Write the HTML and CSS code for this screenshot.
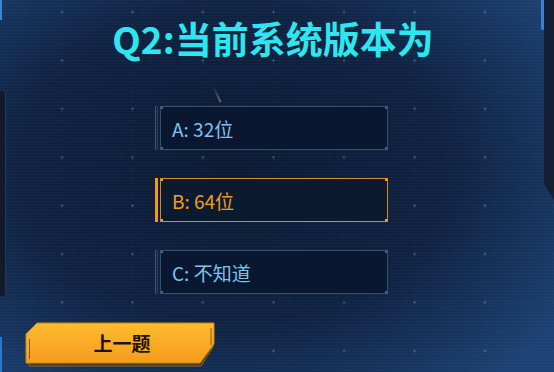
FILE: index.html
```html
<!DOCTYPE html>
<html lang="zh-CN">
<head>
<meta charset="utf-8">
<title>Q2</title>
<link rel="stylesheet" href="styles.css">
</head>
<body>
<div class="screen">
  <div class="edge-left-bar-top"></div>
  <div class="edge-left-panel"></div>
  <div class="edge-left-bar-bottom"></div>
  <div class="edge-right-panel"></div>
  <div class="edge-right-bar"></div>
  <div class="streak"></div>

  <h1 class="title">Q2:当前系统版本为</h1>

  <div class="options">
    <div class="option">
      <span class="option-mark"></span>
      <div class="option-box">A: 32位</div>
    </div>
    <div class="option option-active">
      <span class="option-mark"></span>
      <div class="option-box">B: 64位</div>
    </div>
    <div class="option">
      <span class="option-mark"></span>
      <div class="option-box">C: 不知道</div>
    </div>
  </div>

  <button class="prev-btn" type="button">
    <svg class="prev-shape" viewBox="0 0 194 48" width="194" height="48" aria-hidden="true">
      <defs>
        <linearGradient id="btnGrad" x1="0" y1="0" x2="0" y2="1">
          <stop offset="0" stop-color="#ffbb2e"/>
          <stop offset="1" stop-color="#f59c1e"/>
        </linearGradient>
      </defs>
      <polygon points="5,16 15,5 189,5 189,26 177,45 5,45" fill="#4a3818" stroke="#8a6420" stroke-width="1"/>
      <polygon points="2,13 13,2 190,2 190,23 176,42 2,42" fill="url(#btnGrad)" stroke="#c98814" stroke-width="1"/>
      <line x1="5.5" y1="18" x2="5.5" y2="38" stroke="#8a5a10" stroke-width="1"/>
      <line x1="187" y1="7" x2="187" y2="24" stroke="#8a5a10" stroke-width="1"/>
    </svg>
    <span class="prev-label">上一题</span>
  </button>
</div>
</body>
</html>
```

FILE: styles.css
```css
html, body {
  margin: 0;
  padding: 0;
  background: #0e1f3a;
}

.screen {
  position: relative;
  width: 554px;
  height: 372px;
  overflow: hidden;
  display: flex;
  flex-direction: column;
  font-family: "Noto Sans CJK SC", "Noto Sans", sans-serif;
  background:
    repeating-linear-gradient(to bottom, rgba(120, 160, 210, 0.045) 0 1px, transparent 1px 3px),
    radial-gradient(circle, rgba(140, 170, 210, 0.4) 0.8px, transparent 1.5px) 26.75px -12.2px / 70.5px 48.4px,
    radial-gradient(circle, rgba(110, 140, 185, 0.13) 0.6px, transparent 1.1px) 0 -12.2px / 9.8px 48.4px,
    radial-gradient(circle, rgba(110, 140, 185, 0.13) 0.6px, transparent 1.1px) 26.75px 0 / 70.5px 9.7px,
    radial-gradient(ellipse 70% 75% at 42% 45%, #0c1b33 0%, #0f2241 55%, #183661 85%, #1d4172 100%);
}

/* frame decorations */
.edge-left-bar-top {
  position: absolute;
  left: 0;
  top: 0;
  width: 2px;
  height: 20px;
  background: #3b86d6;
}
.edge-left-panel {
  position: absolute;
  left: 0;
  top: 91px;
  width: 5px;
  height: 205px;
  background: #0f1a2d;
  border-right: 1px solid #22385a;
  border-radius: 0 3px 3px 0;
}
.edge-left-bar-bottom {
  position: absolute;
  left: 0;
  top: 337px;
  width: 2px;
  height: 35px;
  background: #2f78c8;
}
.edge-right-panel {
  position: absolute;
  right: 0;
  top: 0;
  width: 10px;
  height: 200px;
  background: #141f33;
  clip-path: polygon(0 0, 100% 0, 100% 100%, 0 92%);
}
.edge-right-bar {
  position: absolute;
  left: 541px;
  top: 0;
  width: 3px;
  height: 30px;
  background: #3f7fd0;
  border-radius: 0 0 2px 2px;
}
.streak {
  position: absolute;
  left: 216px;
  top: 86px;
  width: 1.5px;
  height: 17px;
  background: linear-gradient(to bottom, rgba(200, 170, 150, 0), rgba(200, 160, 140, 0.55));
  transform: rotate(-25deg);
}

/* title */
.title {
  margin: 20px 0 0;
  padding-right: 8px;
  text-align: center;
  font-size: 37px;
  line-height: 37px;
  font-weight: 700;
  color: #2de6f0;
  letter-spacing: 0;
}

/* options */
.options {
  margin: 49px 0 0 155px;
  display: flex;
  flex-direction: column;
  gap: 28px;
}
.option {
  display: flex;
  width: 233px;
  height: 44px;
}
.option-mark {
  width: 3px;
  margin-right: 2px;
  border-left: 1px solid #3b5676;
  border-right: 1px solid #2b4362;
  box-sizing: border-box;
}
.option-box {
  flex: 1;
  display: flex;
  align-items: center;
  padding-left: 11px;
  box-sizing: border-box;
  border: 1px solid #34506f;
  color: #7ec4ef;
  font-size: 19px;
  background:
    linear-gradient(#4a6688, #4a6688) left top / 3px 3px no-repeat border-box,
    linear-gradient(#4a6688, #4a6688) right top / 3px 3px no-repeat border-box,
    linear-gradient(#4a6688, #4a6688) left bottom / 3px 3px no-repeat border-box,
    linear-gradient(#4a6688, #4a6688) right bottom / 3px 3px no-repeat border-box,
    #0a1730;
}
.option-active .option-mark {
  border: none;
  background: #f29a1e;
}
.option-active .option-box {
  border-color: #d68a1f;
  color: #f29c22;
  background:
    linear-gradient(#f5a22a, #f5a22a) left top / 3px 3px no-repeat border-box,
    linear-gradient(#f5a22a, #f5a22a) right top / 3px 3px no-repeat border-box,
    linear-gradient(#f5a22a, #f5a22a) left bottom / 3px 3px no-repeat border-box,
    linear-gradient(#f5a22a, #f5a22a) right bottom / 3px 3px no-repeat border-box,
    #0c1a30;
}

/* previous button */
.prev-btn {
  position: relative;
  margin: 27px 0 0 24px;
  width: 194px;
  height: 48px;
  padding: 0 0 6px 0;
  border: none;
  background: transparent;
  display: flex;
  align-items: center;
  justify-content: center;
  cursor: pointer;
}
.prev-shape {
  position: absolute;
  left: 0;
  top: 0;
}
.prev-label {
  position: relative;
  font-family: "Noto Sans CJK SC", sans-serif;
  font-weight: 700;
  font-size: 19px;
  line-height: 19px;
  color: #1b1206;
  margin-left: 2px;
}
```
